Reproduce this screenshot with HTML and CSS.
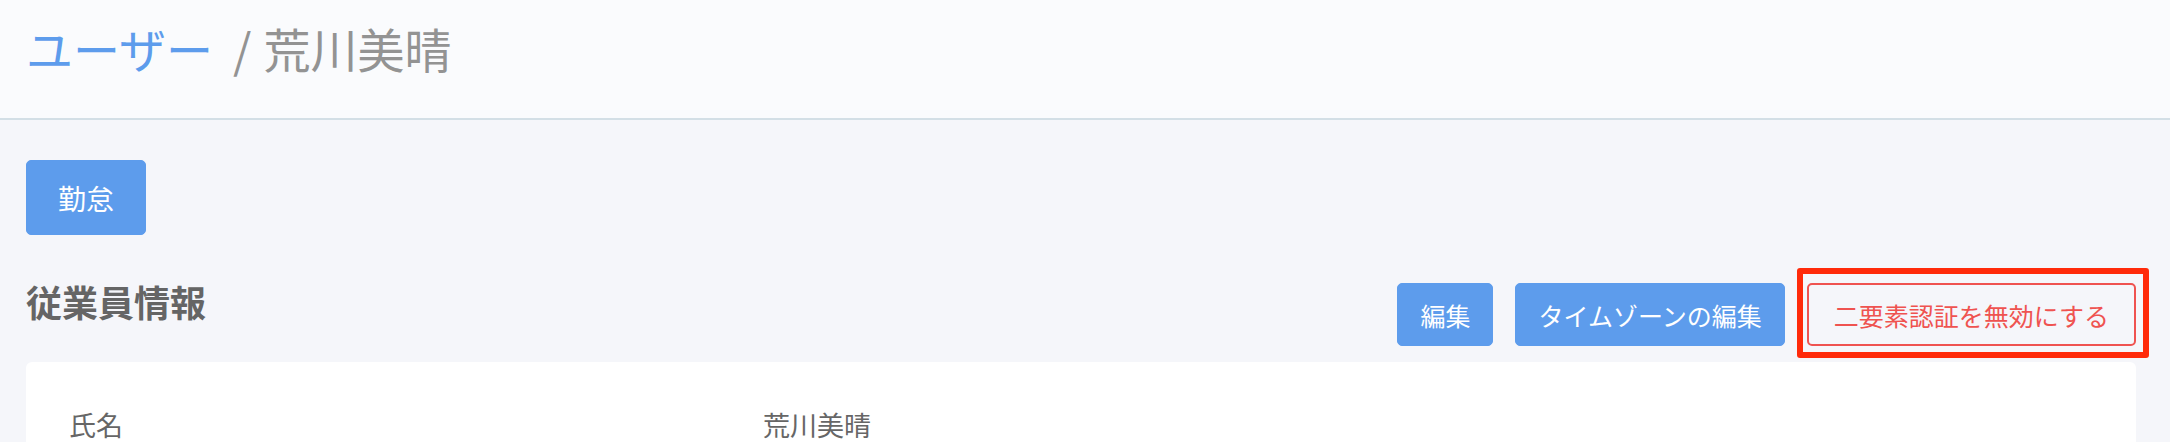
FILE: index.html
```html
<!DOCTYPE html>
<html lang="ja">
<head>
  <meta charset="UTF-8" />
  <meta name="viewport" content="width=device-width, initial-scale=1.0" />
  <title>荒川美晴 | ユーザー</title>
  <link rel="stylesheet" href="styles.css">
</head>
<body>
  <header class="page-header">
    <h1 class="breadcrumb">
      <a href="#" class="crumb-link">ユーザー</a>
      <span class="crumb-sep">/</span>
      <span class="crumb-current">荒川美晴</span>
    </h1>
  </header>

  <main class="content">
    <div class="top-actions">
      <button class="btn btn-primary btn-lg">勤怠</button>
    </div>

    <section class="employee">
      <div class="section-head">
        <h2 class="section-title">従業員情報</h2>
        <div class="section-actions">
          <button class="btn btn-primary">編集</button>
          <button class="btn btn-primary">タイムゾーンの編集</button>
          <button class="btn btn-danger-outline highlighted">二要素認証を無効にする</button>
        </div>
      </div>

      <div class="card">
        <dl class="info-row">
          <dt>氏名</dt>
          <dd>荒川美晴</dd>
        </dl>
      </div>
    </section>
  </main>
</body>
</html>
```

FILE: styles.css
```css
* {
  margin: 0;
  padding: 0;
  box-sizing: border-box;
}

html, body {
  height: 100%;
  overflow: hidden;
}

body {
  font-family: "Noto Sans CJK JP", "Noto Sans", sans-serif;
  background: #f5f6fa;
  color: #666;
}

.page-header {
  height: 120px;
  background: #fafbfd;
  border-bottom: 2px solid #d3dfe6;
  padding: 19px 26px 0;
}

.breadcrumb {
  font-size: 47px;
  font-weight: 400;
  line-height: 58px;
  color: #939393;
  display: flex;
  align-items: center;
}

.crumb-link {
  color: #5d9cec;
  text-decoration: none;
}

.crumb-sep {
  margin: 0 12px 0 20px;
  color: #939393;
}

.content {
  padding: 40px 34px 0 26px;
}

.btn {
  font-family: inherit;
  font-size: 25px;
  height: 63px;
  padding: 0 22px;
  border: 1px solid transparent;
  border-radius: 5px;
  cursor: pointer;
}

.btn-primary {
  background: #5d9cec;
  border-color: #5d9cec;
  color: #fff;
}

.btn-lg {
  font-size: 28px;
  height: 75px;
  padding: 0 31px;
}

.btn-danger-outline {
  background: transparent;
  border: 2px solid #ef5350;
  color: #ef5350;
  padding: 0 25px;
}

/* annotation box drawn around the button */
.highlighted {
  position: relative;
}

.highlighted::after {
  content: "";
  position: absolute;
  top: -17px;
  right: -15px;
  bottom: -14px;
  left: -12px;
  border: 6px solid #ff2a0a;
  border-radius: 3px;
  pointer-events: none;
}

.section-head {
  display: flex;
  justify-content: space-between;
  align-items: flex-start;
  margin-top: 45px;
}

.section-title {
  font-size: 36px;
  font-weight: 700;
  line-height: 43px;
  color: #656565;
}

.section-actions {
  display: flex;
  gap: 22px;
  padding-top: 3px;
}

.card {
  margin-top: 16px;
  background: #fff;
  border-radius: 6px;
  padding: 43px;
  min-height: 200px;
}

.info-row {
  display: flex;
  font-size: 27px;
  line-height: 40px;
  color: #666;
}

.info-row dt {
  width: 694px;
}
```
